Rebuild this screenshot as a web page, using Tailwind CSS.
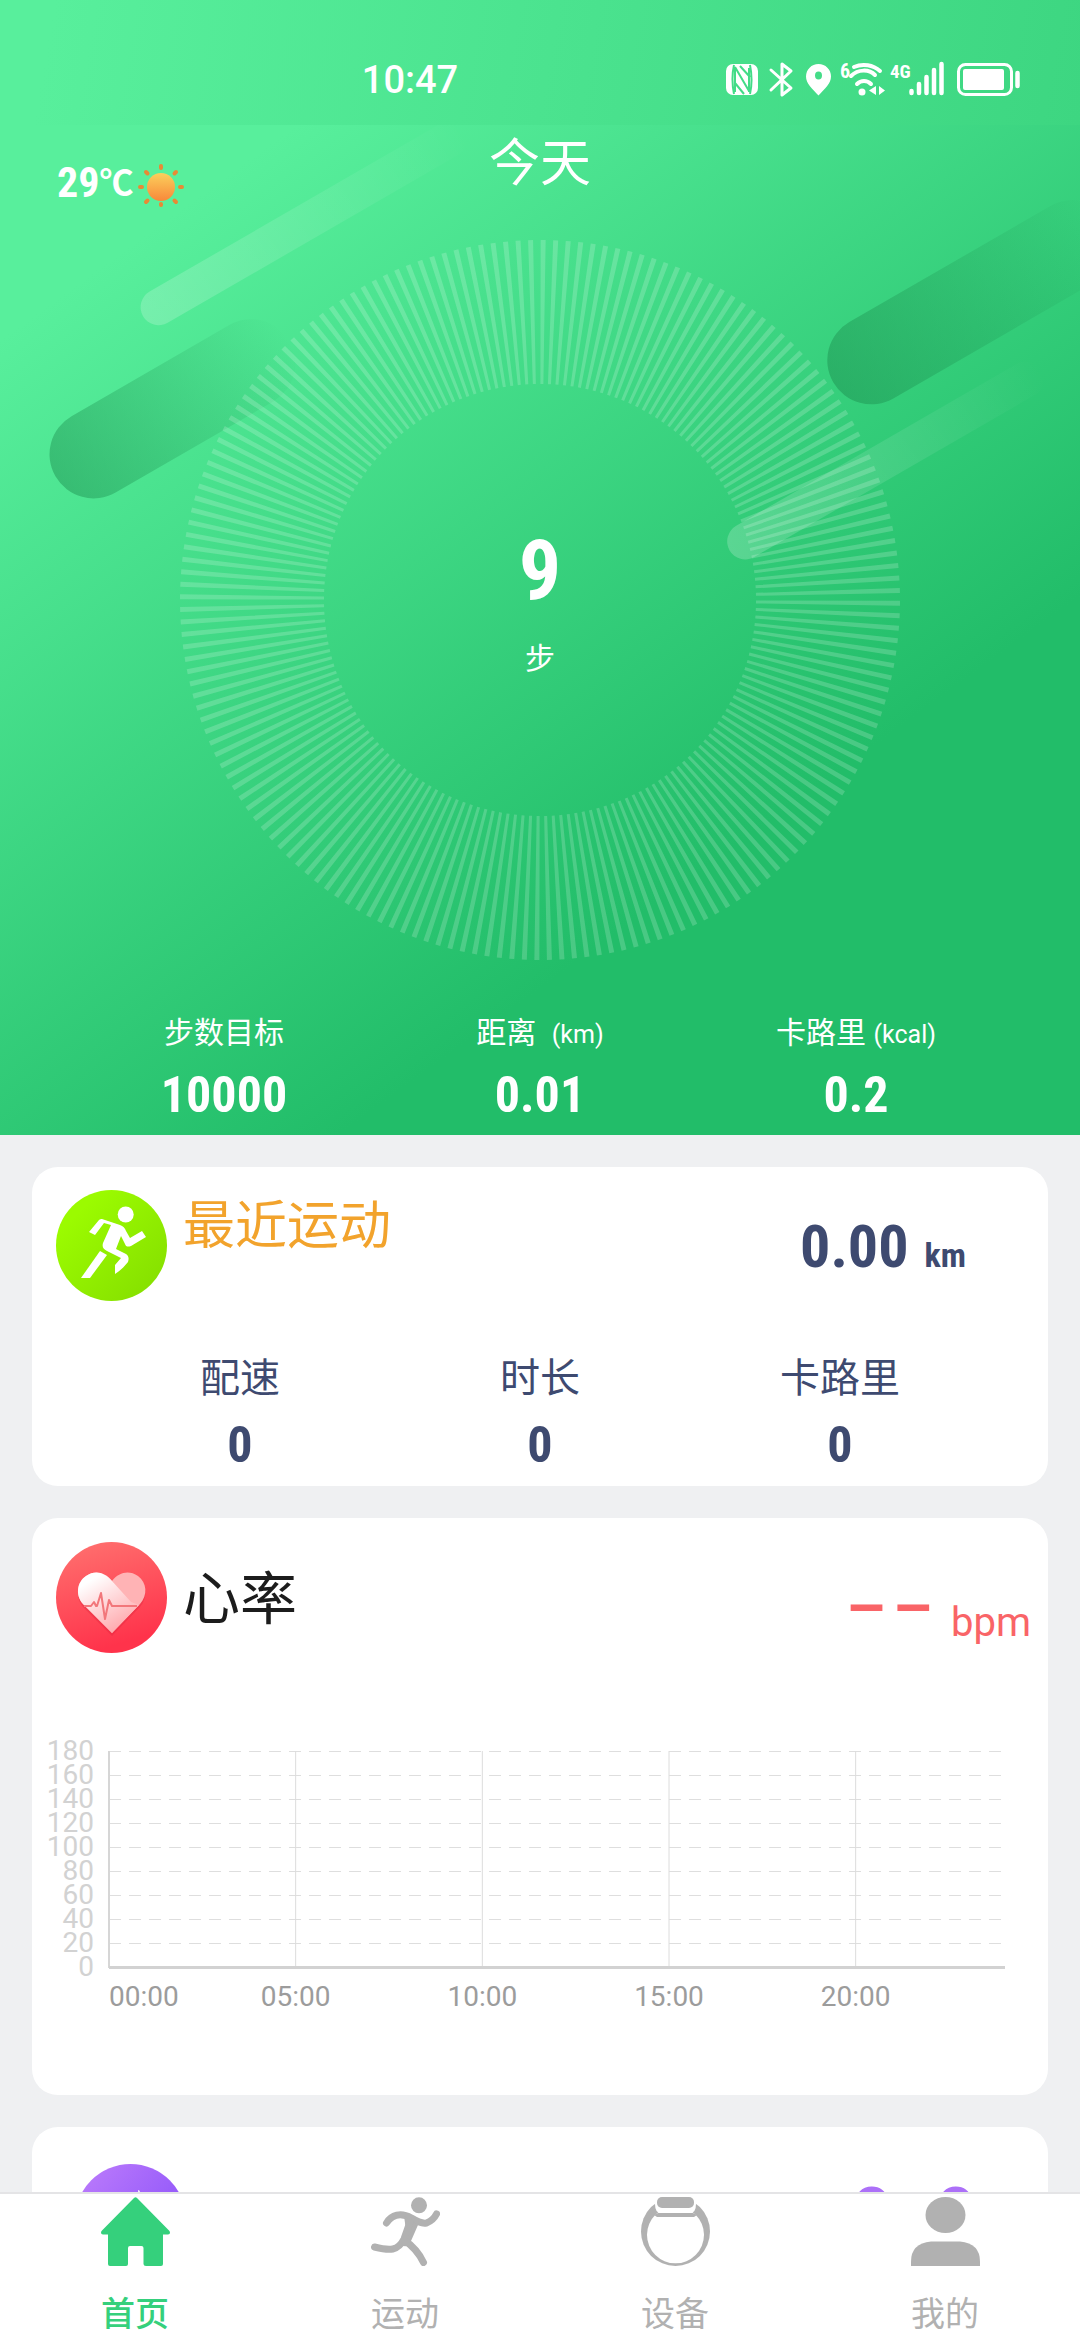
<!DOCTYPE html>
<html lang="zh-CN">
<head>
<meta charset="utf-8">
<meta name="viewport" content="width=device-width, initial-scale=1">
<title>首页</title>
<script src="https://cdn.jsdelivr.net/npm/@tailwindcss/browser@4"></script>
</head>
<body class="flex h-screen flex-col bg-[#eff0f2] font-['Roboto','Noto_Sans_CJK_SC',sans-serif]">
<main class="min-h-0 flex-1 overflow-y-auto [scrollbar-width:none]">

  <header class="flex h-[125px] items-center justify-between bg-[linear-gradient(100deg,#58ef9c_5%,#3dd681_100%)] pt-[34px] pr-[59px] pl-[33.5%] text-white">
    <time class="text-[38px] font-medium leading-none">10:47</time>
    <svg class="h-10 w-[298px]" viewBox="0 0 298 40" fill="none" stroke="#fff" aria-hidden="true">
      <rect x="3" y="4" width="32" height="31" rx="7" fill="#fff" stroke="none"/>
      <path d="M11 5c-2 9-2 19 0 29M12 7l14 24M12 7v25M26 8v24M17 6l10 11M27 34c2-9 2-19 0-29M12 23l9 11" stroke="#42dc87" stroke-width="2"/>
      <path d="M48 10l20 18-9 7V4l9 7-20 19" stroke-width="3" stroke-linejoin="round" stroke-linecap="round"/>
      <path d="M95.500 4c-7 0-12.500 5.500-12.500 12.500 0 7 6 12 12.500 19 6.500-7 12.500-12 12.500-19C108 9.500 102.500 4 95.500 4zm0 7.500a3.500 4 0 1 1 0 8 3.500 4 0 1 1 0-8z" fill="#fff" stroke="none"/>
      <text x="117" y="18" font-size="20" font-weight="700" fill="#fff" stroke="none" class="font-['Roboto_Condensed','Roboto',sans-serif]">6</text>
      <path d="M131 7c9-4 19-2 26 4M128 16c7-7 18-7 24-1M134 24c4-4 10-4 14 0" stroke-width="4" stroke-linecap="round"/>
      <circle cx="139" cy="32" r="3.500" fill="#fff" stroke="none"/>
      <path d="M153 26v9l-7-4.500zM156 26v9l6-4.500z" fill="#fff" stroke="none"/>
      <text x="167" y="18" font-size="19" font-weight="700" fill="#fff" stroke="none" class="font-['Roboto_Condensed','Roboto',sans-serif]">4G</text>
      <path d="M188.500 31v2M196 24v9M203.500 17v16M211 10v23M218.500 4v29" stroke-width="4.500" stroke-linecap="round"/>
      <rect x="235.500" y="4.500" width="53" height="30" rx="7" stroke-width="3"/>
      <rect x="240" y="9" width="41" height="21" rx="2" fill="#fff" stroke="none"/>
      <path d="M294.500 13v13" stroke-width="4.500" stroke-linecap="round"/>
    </svg>
  </header>

  <section class="relative overflow-hidden bg-[linear-gradient(144deg,#58ef9c_12%,#22bd69_70%)] pb-[10px] text-white">
    <svg class="absolute inset-0 h-full w-full" viewBox="0 0 1080 1009" preserveAspectRatio="xMidYMin slice" aria-hidden="true">
      <defs>
        <linearGradient id="light"><stop offset="0" stop-color="#fff" stop-opacity=".2"/><stop offset="1" stop-color="#fff" stop-opacity="0"/></linearGradient>
        <linearGradient id="dark"><stop offset="0" stop-color="#1b8a4c" stop-opacity=".45"/><stop offset="1" stop-color="#1b8a4c" stop-opacity="0"/></linearGradient>
      </defs>
      <g transform="translate(159 182) rotate(-30)"><rect x="-18" y="-18" width="370" height="36" rx="18" fill="url(#light)"/></g>
      <g transform="translate(94 329) rotate(-30)"><rect x="-44" y="-44" width="270" height="88" rx="44" fill="url(#dark)"/></g>
      <g transform="translate(871 235) rotate(-30)"><rect x="-44" y="-44" width="320" height="88" rx="44" fill="url(#dark)"/></g>
      <g transform="translate(745 416) rotate(-30)"><rect x="-18" y="-18" width="360" height="36" rx="18" fill="url(#light)"/></g>
    </svg>

    <div class="relative grid h-[115px] grid-cols-3">
      <p class="flex items-center pl-[57px]">
        <span class="font-['Roboto_Condensed','Roboto',sans-serif] text-[42px] font-bold leading-none">29</span>
        <span class="text-[34px] font-bold leading-none">℃</span>
        <svg class="ml-1 h-12 w-12" viewBox="0 0 48 48" aria-label="晴">
          <defs><linearGradient id="sun" x1="0" y1="0" x2="0" y2="1"><stop offset="0" stop-color="#fbd05c"/><stop offset="1" stop-color="#f8883a"/></linearGradient></defs>
          <circle cx="24" cy="28" r="14" fill="url(#sun)"/>
          <g transform="translate(0 4)" stroke="#e88a35" stroke-width="4" stroke-linecap="round"><path d="M24 3v2M24 41v1M3 24h2M43 24h2M9 9l1.500 1.500M37.500 37.500L39 39M9 39l1.500-1.500M37.500 10.500L39 9"/></g>
        </svg>
      </p>
      <h1 class="pt-[9px] text-center text-[51px] leading-[60px]">今天</h1>
    </div>

    <div class="relative mx-auto flex h-[720px] w-[720px] flex-col items-center justify-center gap-7 pt-[10px]">
      <svg class="absolute inset-0 h-full w-full" viewBox="0 0 720 720" fill="#fff" fill-opacity=".18" aria-hidden="true"><path id="ring"/></svg>
      <strong class="relative font-['Roboto_Condensed','Roboto',sans-serif] text-[84px] font-bold leading-[80px]">9</strong>
      <span class="relative text-[30px] leading-10">步</span>
    </div>

    <dl class="relative grid grid-cols-3 px-[66px] pt-[53px] text-center">
      <div><dt class="h-10 text-[30px] leading-10">步数目标</dt><dd class="mt-3 font-['Roboto_Condensed','Roboto',sans-serif] text-[50px] font-bold leading-[60px]">10000</dd></div>
      <div><dt class="h-10 text-[30px] leading-10">距离 <span class="ml-2 text-[25px]">(km)</span></dt><dd class="mt-3 font-['Roboto_Condensed','Roboto',sans-serif] text-[50px] font-bold leading-[60px]">0.01</dd></div>
      <div><dt class="h-10 text-[30px] leading-10">卡路里 <span class="text-[25px]">(kcal)</span></dt><dd class="mt-3 font-['Roboto_Condensed','Roboto',sans-serif] text-[50px] font-bold leading-[60px]">0.2</dd></div>
    </dl>
  </section>

  <div class="flex flex-col gap-8 p-8">
    <section class="rounded-[26px] bg-white pt-[23px] pb-4 text-[#3e4a70]">
      <div class="flex pr-[82px] pl-6">
        <svg class="h-[111px] w-[111px]" viewBox="0 0 111 111" aria-hidden="true">
          <defs><linearGradient id="lime" x1="0" y1="0" x2="1" y2="1"><stop offset="0.200" stop-color="#9bfb00"/><stop offset="1" stop-color="#83dc00"/></linearGradient></defs>
          <circle cx="55.500" cy="55.500" r="55.500" fill="url(#lime)"/>
          <circle cx="69.700" cy="24.500" r="8" fill="#fff"/>
          <path d="M33 42l10-12c1-1 2-1 3-1l18 6c3 1 5 3 6 6l4 7 12-7 4 6-15 9c-3 1-5 1-6-2l-4-8-5 13 10 5c3 2 3 5 2 8-4 5-8 9-13 12v-9l6-7-14-7c-4-2-5-4-4-8l8-18-7-2-9 12z" fill="#fff"/>
          <path d="M44 61l7 4-17 23h-9z" fill="#fff"/>
        </svg>
        <h2 class="ml-4 text-[52px] leading-[74px] text-[#f2a32c]">最近运动</h2>
        <p class="ml-auto flex items-baseline gap-4 pt-[22px] font-['Roboto_Condensed','Roboto',sans-serif] font-bold">
          <span class="text-[60px] leading-[70px]">0.00</span><span class="text-[34px]">km</span>
        </p>
      </div>
      <dl class="mt-[53px] grid grid-cols-3 px-[58px] text-center">
        <div><dt class="text-[40px] leading-[50px]">配速</dt><dd class="mt-4 font-['Roboto_Condensed','Roboto',sans-serif] text-[50px] font-bold leading-[50px]">0</dd></div>
        <div><dt class="text-[40px] leading-[50px]">时长</dt><dd class="mt-4 font-['Roboto_Condensed','Roboto',sans-serif] text-[50px] font-bold leading-[50px]">0</dd></div>
        <div><dt class="text-[40px] leading-[50px]">卡路里</dt><dd class="mt-4 font-['Roboto_Condensed','Roboto',sans-serif] text-[50px] font-bold leading-[50px]">0</dd></div>
      </dl>
    </section>

    <section class="rounded-[26px] bg-white pt-6 pb-[78px]">
      <div class="flex items-center pr-[17px] pl-6">
        <svg class="h-[111px] w-[111px]" viewBox="0 0 111 111" aria-hidden="true">
          <defs>
            <linearGradient id="red" x1="0" y1="0" x2=".3" y2="1"><stop offset="0" stop-color="#ff7370"/><stop offset="1" stop-color="#ff334b"/></linearGradient>
            <linearGradient id="heart" x1=".2" y1="0" x2=".8" y2="1"><stop offset="0.100" stop-color="#fff"/><stop offset="1" stop-color="#ff9fa4"/></linearGradient>
          </defs>
          <circle cx="55.500" cy="55.500" r="55.500" fill="url(#red)"/>
          <path d="M56 94L27 65c-8-9-6-24 3-30 9-6 18-3 26 5 7-8 17-11 26-5 9 7 10 21 2 30z" fill="#c8102e" opacity=".22"/>
          <path d="M56 91L27 62c-8-9-6-22 3-28 9-6 19-4 26 5 7-9 17-11 26-5 9 7 10 19 2 28z" fill="#ffb3b5"/>
          <path d="M56 91L27 62c-8-9-6-22 3-28 9-6 18-4 26 5l19 21 8 3z" fill="url(#heart)"/>
          <path d="M28 64h7l3-4 2 4h1l4-13 4 26 4-19 3 6h25" fill="none" stroke="#f2777b" stroke-width="2" stroke-linejoin="round"/>
        </svg>
        <h2 class="ml-4 pt-1 text-[57px] leading-[80px] text-[#1c1c1c]">心率</h2>
        <p class="ml-auto flex pt-[10px] text-[#f96467]">
          <span class="mr-5 flex gap-[11px] font-['Liberation_Sans',sans-serif] text-[64px] font-bold leading-[80px]"><span>–</span><span>–</span></span><span class="self-end text-[40px] leading-10">bpm</span>
        </p>
      </div>
      <div class="mt-[98px] pr-[43px] pl-[77px]">
        <svg class="block h-[266px] w-full overflow-visible" role="img" aria-label="心率图表" font-size="28">
          <g stroke="#dedede" stroke-dasharray="12 8">
            <line x2="100%" y1="0.500" y2="0.500"/><line x2="100%" y1="24.500" y2="24.500"/><line x2="100%" y1="48.500" y2="48.500"/><line x2="100%" y1="72.500" y2="72.500"/><line x2="100%" y1="96.500" y2="96.500"/><line x2="100%" y1="120.500" y2="120.500"/><line x2="100%" y1="144.500" y2="144.500"/><line x2="100%" y1="168.500" y2="168.500"/><line x2="100%" y1="192.500" y2="192.500"/>
          </g>
          <g stroke="#dcdcdc">
            <line x1="20.833%" x2="20.833%" y2="216"/><line x1="41.667%" x2="41.667%" y2="216"/><line x1="62.500%" x2="62.500%" y2="216"/><line x1="83.333%" x2="83.333%" y2="216"/>
          </g>
          <line y2="217" stroke="#d6d6d6" stroke-width="2"/>
          <line x2="100%" y1="216.500" y2="216.500" stroke="#d2d2d2" stroke-width="3"/>
          <g fill="#d2d2d2" text-anchor="end">
            <text x="-15" y="9">180</text><text x="-15" y="33">160</text><text x="-15" y="57">140</text><text x="-15" y="81">120</text><text x="-15" y="105">100</text><text x="-15" y="129">80</text><text x="-15" y="153">60</text><text x="-15" y="177">40</text><text x="-15" y="201">20</text><text x="-15" y="225">0</text>
          </g>
          <g fill="#9c9c9c" text-anchor="middle">
            <text x="0" y="255" text-anchor="start">00:00</text><text x="20.833%" y="255">05:00</text><text x="41.667%" y="255">10:00</text><text x="62.500%" y="255">15:00</text><text x="83.333%" y="255">20:00</text>
          </g>
        </svg>
      </div>
    </section>

    <section class="flex justify-between rounded-[26px] bg-white pt-[37px] pr-[72px] pb-8 pl-[43px]">
      <svg class="h-[111px] w-[111px]" viewBox="0 0 111 111" aria-label="睡眠">
        <defs><linearGradient id="violet" x1=".2" y1="0" x2=".8" y2=".5"><stop offset="0" stop-color="#b878fb"/><stop offset="1" stop-color="#955afa"/></linearGradient></defs>
        <circle cx="55.500" cy="55.500" r="55.500" fill="url(#violet)"/>
        <path d="M42 30q4-4 7 0v14h-7zM64 26l1.500 3 3 1-3 1.500-1.500 3-1-8z" fill="#fff"/>
      </svg>
      <p class="flex gap-11 pt-[14px] text-[70px] font-bold leading-[70px] text-[#ac70f8]"><span>0</span><span>0</span></p>
    </section>
  </div>
</main>

<nav class="grid h-[148px] shrink-0 grid-cols-4 border-t-2 border-[#e4e4e6] bg-white pt-[3px] text-[34px] leading-[40px] text-[#b1b1b1]">
  <a href="#home" class="flex flex-col items-center gap-7 text-[#35d07c]">
    <svg class="h-[69px] w-[69px]" viewBox="0 0 69 69" fill="currentColor" aria-hidden="true"><path d="M33 1q1.500-1.500 3 0l32.500 33q1.500 3-1.500 3.500h-5V67q0 2-2 2H45q-2.500 0-2.500-2V51q0-2-2-2H29q-2 0-2 2v16q0 2-2 2H9q-2 0-2-2V37.500H2Q-1 37 .5 34z"/></svg>
    <span class="font-medium">首页</span>
  </a>
  <a href="#sport" class="flex flex-col items-center gap-7">
    <svg class="h-[69px] w-[69px]" viewBox="0 0 69 69" fill="none" stroke="currentColor" stroke-width="7" stroke-linecap="round" stroke-linejoin="round" aria-hidden="true"><circle cx="48" cy="8.300" r="8" fill="currentColor" stroke="none"/><path d="M15.500 26c5-8 14-11 25-5 5 3 10 6 15 5 5-2 8-5 10-9"/><path d="M33 19l14 9-7 16q-3 8-10 4l5-15z" fill="currentColor" stroke="none"/><path d="M39 25l-6 17c-6 12-14 12-29.500 8M33 43c9 6 15 13 19.500 22.500"/></svg>
    <span>运动</span>
  </a>
  <a href="#device" class="flex flex-col items-center gap-7">
    <svg class="h-[69px] w-[69px]" viewBox="0 0 69 69" fill="currentColor" aria-hidden="true"><circle cx="34.500" cy="34.500" r="34.500"/><circle cx="34.500" cy="37.800" r="28.500" fill="#fff"/><path d="M17-2h35q3 4 3 9 0 9-6 9H20q-6 0-6-9 0-5 3-9z" fill="#fff"/><path d="M13 18l4-2h35l4 2-3 2H16z"/><rect x="16" width="37" height="11" rx="5"/></svg>
    <span>设备</span>
  </a>
  <a href="#mine" class="flex flex-col items-center gap-7">
    <svg class="h-[69px] w-[69px]" viewBox="0 0 69 69" fill="currentColor" aria-hidden="true"><ellipse cx="34.500" cy="18" rx="20" ry="18"/><path d="M20 44.500h29q20 2 20 20V69H0v-4.500q0-18 20-20z"/></svg>
    <span>我的</span>
  </a>
</nav>
<script>
  // 180 spokes of the step dial, each one a thin wedge between the two radii
  const point = (r, deg) => {
    const a = deg * Math.PI / 180;
    return (360 + r * Math.cos(a)).toFixed(2) + ' ' + (360 + r * Math.sin(a)).toFixed(2);
  };
  let d = '';
  for (let i = 0; i < 180; i++) {
    const a = i * 2 + 0.1, b = a + 0.8;
    d += `M${point(216, a)}L${point(360, a)}L${point(360, b)}L${point(216, b)}Z`;
  }
  document.getElementById('ring').setAttribute('d', d);
</script>
</body>
</html>
